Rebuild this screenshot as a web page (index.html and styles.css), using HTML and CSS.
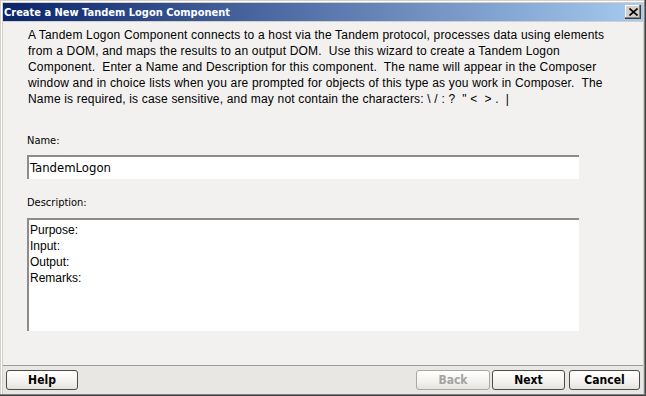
FILE: index.html
```html
<!DOCTYPE html>
<html>
<head>
<meta charset="utf-8">
<link rel="stylesheet" href="styles.css">
</head>
<body>
<div class="window">
  <div class="titlebar">
    <span class="title">Create a New Tandem Logon Component</span>
    <span class="close"><svg width="9" height="8" viewBox="0 0 9 8"><path d="M0.5 0.5 L8.5 7.5 M8.5 0.5 L0.5 7.5" stroke="#000" stroke-width="1.6" fill="none"/></svg></span>
  </div>
  <div class="content">
    <p class="intro">A Tandem Logon Component connects to a host via the Tandem protocol, processes data using elements<br>from a DOM, and maps the results to an output DOM.&nbsp; Use this wizard to create a Tandem Logon<br>Component.&nbsp; Enter a Name and Description for this component.&nbsp; The name will appear in the Composer<br>window and in choice lists when you are prompted for objects of this type as you work in Composer.&nbsp; The<br>Name is required, is case sensitive, and may not contain the characters: \ / : ? &nbsp;" &lt; &nbsp;&gt; . &nbsp;|</p>
    <div class="label name-label">Name:</div>
    <div class="field">TandemLogon</div>
    <div class="label desc-label">Description:</div>
    <div class="area">Purpose:<br>Input:<br>Output:<br>Remarks:</div>
  </div>
  <div class="buttons">
    <button class="btn help">Help</button>
    <div class="spacer"></div>
    <button class="btn back" disabled>Back</button>
    <button class="btn next">Next</button>
    <button class="btn cancel">Cancel</button>
  </div>
</div>
</body>
</html>
```
FILE: styles.css
```css
html, body {
  margin: 0;
  padding: 0;
}
body {
  width: 646px;
  height: 396px;
  overflow: hidden;
}
.window {
  width: 646px;
  height: 396px;
  box-sizing: border-box;
  padding: 3px 3px 2px 3px;
  background: #d4d0c8;
  box-shadow: inset -1px -1px #404040, inset -2px -2px #808080, inset 1px 1px #d4d0c8, inset 2px 2px #ffffff;
  display: flex;
  flex-direction: column;
}
.titlebar {
  height: 18px;
  flex: none;
  background: linear-gradient(to right, #0a246a, #a6caf0);
  display: flex;
  align-items: center;
  justify-content: space-between;
  padding: 0 2px 0 1px;
}
.title {
  color: #fff;
  font-family: "DejaVu Sans Condensed", "DejaVu Sans", sans-serif;
  font-stretch: condensed;
  font-weight: bold;
  font-size: 11px;
}
.close {
  width: 16px;
  height: 14px;
  box-sizing: border-box;
  background: #d4d0c8;
  box-shadow: inset -1px -1px #404040, inset -2px -2px #808080, inset 1px 1px #ffffff;
  display: flex;
  align-items: center;
  justify-content: center;
}
.content {
  flex: 1;
  margin-top: 1px;
  background: #f2f1ef;
  border-bottom: 1px solid #9d9d9b;
  padding: 5px 0 0 24px;
}
.intro {
  margin: 0;
  padding-left: 1px;
  font-family: "Liberation Sans", Arial, sans-serif;
  font-size: 12px;
  letter-spacing: 0.18px;
  line-height: 16px;
  color: #000;
}
.label {
  font-family: "DejaVu Sans Condensed", "DejaVu Sans", sans-serif;
  font-stretch: condensed;
  font-size: 11px;
  line-height: 13px;
  color: #000;
}
.name-label {
  margin-top: 27px;
}
.field {
  margin-top: 8px;
  width: 552px;
  height: 24px;
  box-sizing: border-box;
  background: #fff;
  border-top: 2px solid #8c8c8c;
  border-left: 2px solid #8c8c8c;
  padding-left: 1px;
  font-family: "DejaVu Sans Condensed", "DejaVu Sans", sans-serif;
  font-stretch: condensed;
  font-size: 13px;
  line-height: 21px;
}
.desc-label {
  margin-top: 17px;
}
.area {
  margin-top: 9px;
  width: 552px;
  height: 113px;
  box-sizing: border-box;
  background: #fff;
  border-top: 2px solid #8c8c8c;
  border-left: 2px solid #8c8c8c;
  padding: 2px 0 0 1px;
  font-family: "Liberation Sans", Arial, sans-serif;
  font-size: 12px;
  line-height: 16px;
}
.buttons {
  height: 28px;
  flex: none;
  background: #e8e7e3;
  display: flex;
  align-items: flex-start;
  padding: 4px 3px 0 3px;
  box-sizing: border-box;
}
.spacer {
  flex: 1;
}
.btn {
  height: 20px;
  box-sizing: border-box;
  border: 1px solid #4c4c4c;
  border-radius: 3px;
  background: linear-gradient(to bottom, #ffffff, #f3f2ee 60%, #e4e3de);
  font-family: "DejaVu Sans Condensed", "DejaVu Sans", sans-serif;
  font-stretch: condensed;
  font-weight: bold;
  font-size: 12px;
  color: #000;
  padding: 0;
  margin: 0;
}
.help { width: 72px; }
.back { width: 74px; margin-right: 2px; color: #a3a3a3; border-color: #a8a8a8; }
.next { width: 73px; }
.cancel { width: 71px; margin-left: 4px; }
```
